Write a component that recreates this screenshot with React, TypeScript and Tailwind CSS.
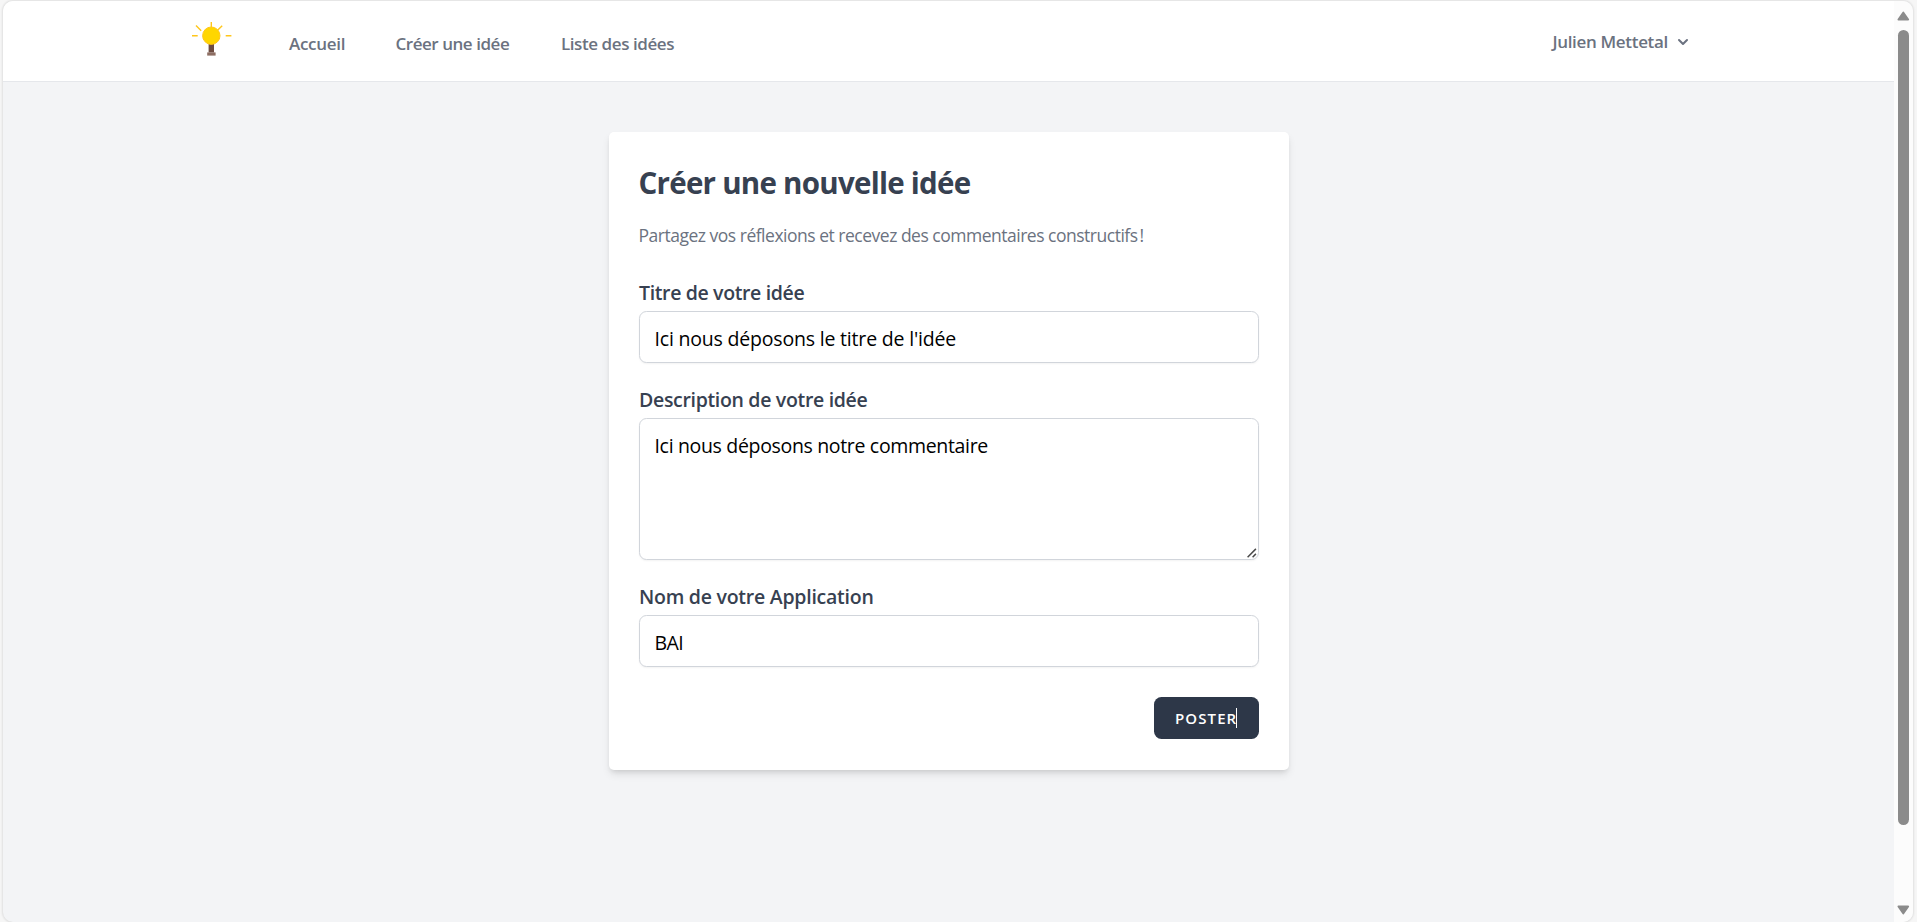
import type { ReactNode } from 'react';

function Bulb() {
  return (
    <svg className="block h-[50px] w-[50px] shrink-0" viewBox="0 0 50 50" fill="none">
      <path d="M25.3 7v5.5M10 10.5l5.2 5.2M36.2 10.7l-4.4 4.4M6 20.7h5.7M39.7 20.7h5.7" stroke="#ffc61a" strokeWidth="1.4" />
      <rect x="22.6" y="28.5" width="5.4" height="9" fill="#6d4c41" />
      <rect x="21.2" y="37.4" width="8.4" height="3.2" fill="#8d6e63" />
      <circle cx="25.3" cy="20.7" r="8.7" fill="#ffd600" stroke="#ffc61a" strokeWidth="1" />
    </svg>
  );
}

function Label({ children }: { children: ReactNode }) {
  return <span className="block h-[30px] text-[19.5px] leading-[30px] font-semibold text-[#374151]">{children}</span>;
}

function Scrollbar() {
  return (
    <div className="flex w-[19px] shrink-0 flex-col items-center bg-[#fcfcfc] pt-[10px] pb-[7px]">
      <svg className="block h-[10px] w-[13px] shrink-0" viewBox="0 0 13 10">
        <path d="M6.3 1.5 11.2 8.5H1.4Z" fill="#8b8b8b" stroke="#8b8b8b" strokeWidth="1.8" strokeLinejoin="round" />
      </svg>
      <div className="mt-[9px] h-[795px] w-[11px] rounded-full bg-[#8b8b8b]" />
      <svg className="mt-auto block h-[10px] w-[13px] shrink-0" viewBox="0 0 13 10">
        <path d="M6.3 8.5 11.2 1.5H1.4Z" fill="#8b8b8b" stroke="#8b8b8b" strokeWidth="1.8" strokeLinejoin="round" />
      </svg>
    </div>
  );
}

const field =
  'block w-full rounded-[7.5px] border border-[#d1d5db] bg-white pr-[15px] pl-[14.5px] text-[19.5px] text-black shadow-[0_1px_2px_rgba(0,0,0,0.05)] outline-none';

export default function App() {
  return (
    <div className="h-[922px] w-full overflow-hidden bg-[#f6f6f6] pt-px pr-[4px] pl-[3px] font-['Open_Sans',sans-serif]">
      <div className="flex h-[921px] overflow-hidden rounded-[10px] bg-[#f3f4f6] shadow-[0_0_2px_1px_rgba(0,0,0,0.09)]">
        <div className="min-w-0 flex-1">
          <header className="flex h-[81px] items-start border-b border-[#e5e7eb] bg-white pl-[183px] text-[17px] font-semibold text-[#6b7280]">
            <div className="pt-[14px]">
              <Bulb />
            </div>
            <nav className="flex pt-[30px] pl-[53px] leading-[25px] whitespace-nowrap">
              <a className="w-[106.5px] tracking-[-0.3px]">Accueil</a>
              <a className="w-[165.5px] tracking-[-0.46px]">Créer une idée</a>
              <a className="tracking-[-0.43px]">Liste des idées</a>
            </nav>
            <div className="mr-[201px] ml-auto flex items-center pt-[28px] leading-[25px]">
              <span className="tracking-[-0.32px]">Julien Mettetal</span>
              <svg className="ml-[5px] block h-5 w-5" viewBox="0 0 20 20" fill="currentColor">
                <path
                  fillRule="evenodd"
                  clipRule="evenodd"
                  d="M5.293 7.293a1 1 0 011.414 0L10 10.586l3.293-3.293a1 1 0 111.414 1.414l-4 4a1 1 0 01-1.414 0l-4-4a1 1 0 010-1.414z"
                />
              </svg>
            </div>
          </header>

          <main className="flex justify-center pt-[50px] pl-px">
            <form className="h-[638px] w-[680px] rounded-[5px] bg-white px-[30px] pt-[30px] shadow-[0_5px_8px_-1px_rgba(0,0,0,0.1),0_2.5px_5px_-2px_rgba(0,0,0,0.1)]">
              <h1 className="-ml-[0.5px] h-[45px] text-[29.5px] leading-[42px] font-bold tracking-[-0.74px] whitespace-nowrap text-[#374151]">
                Créer une nouvelle idée
              </h1>
              <p className="mt-[14px] -ml-[0.5px] h-[28px] text-[17.5px] leading-[28px] tracking-[-0.49px] whitespace-nowrap text-[#6b7280]">
                Partagez vos réflexions et recevez des commentaires constructifs<span className="ml-[2px]">!</span>
              </p>
              <label className="mt-[29px] block tracking-[-0.36px]">
                <Label>Titre de votre idée</Label>
                <input className={`${field} mt-[3px] h-[52px] pt-[2px] tracking-[-0.19px]`} defaultValue="Ici nous déposons le titre de l'idée" />
              </label>
              <label className="mt-[22px] block tracking-[-0.32px]">
                <Label>Description de votre idée</Label>
                <span className="relative mt-[3px] block">
                  <textarea
                    className={`${field} h-[142px] resize-none py-[12px] leading-[30px] tracking-[-0.33px]`}
                    defaultValue="Ici nous déposons notre commentaire"
                  />
                  <svg className="pointer-events-none absolute right-[2px] bottom-[2px] h-[10px] w-[10px]" viewBox="0 0 10 10">
                    <path d="M.6 9.2 8.9.9M5.6 9.2 8.9 5.9" stroke="#4b4b4b" strokeWidth="1.5" />
                  </svg>
                </span>
              </label>
              <label className="mt-[22px] block tracking-[-0.25px]">
                <Label>Nom de votre Application</Label>
                <input className={`${field} mt-[3px] h-[52px] pt-[2px] tracking-[-0.6px]`} defaultValue="BAI" />
              </label>
              <div className="mt-[30px] flex justify-end">
                <button
                  type="button"
                  className="relative flex h-[42px] w-[105px] items-center rounded-[7.5px] bg-[#2d3748] pl-[21px] text-[15px] font-semibold tracking-[1.1px] text-white"
                >
                  POSTER
                  <span className="absolute top-[11px] left-[82px] h-[20px] w-px bg-white" />
                </button>
              </div>
            </form>
          </main>
        </div>
        <Scrollbar />
      </div>
    </div>
  );
}
